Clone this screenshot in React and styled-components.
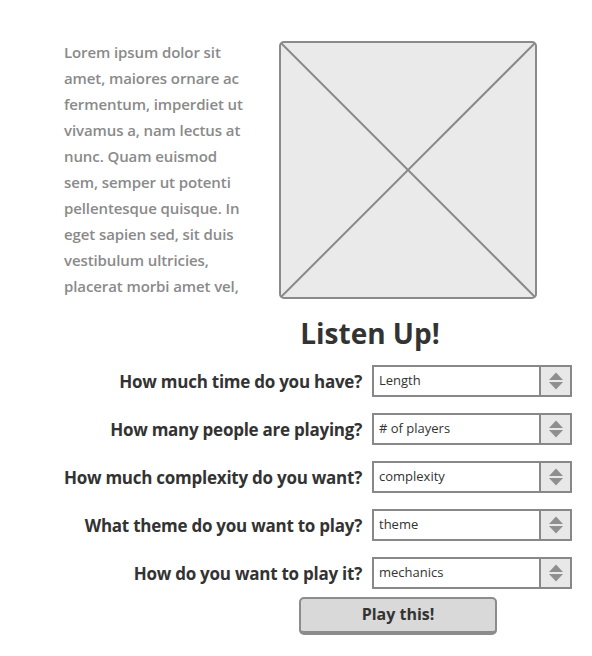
import React from 'react';
import styled, { createGlobalStyle } from 'styled-components';

const GlobalStyle = createGlobalStyle`
  body {
    margin: 0;
    background: #ffffff;
    font-family: "Open Sans", "Liberation Sans", sans-serif;
  }
`;

const Page = styled.div`
  width: 592px;
  padding-top: 39px;
`;

const Intro = styled.div`
  display: flex;
  align-items: flex-start;
  padding-left: 64px;
  gap: 27px;
`;

const Blurb = styled.p`
  margin: 0;
  width: 188px;
  font-size: 15px;
  font-weight: 600;
  line-height: 26px;
  letter-spacing: -0.1px;
  color: #8a8a8a;
`;

const Placeholder = styled.svg`
  display: block;
  margin-top: 2px;
  flex: none;
`;

const Title = styled.h1`
  margin: 15px 0 0;
  padding-left: 148px;
  text-align: center;
  font-size: 28px;
  font-weight: 700;
  line-height: 38px;
  color: #333333;
`;

const Form = styled.div`
  display: grid;
  grid-template-columns: 362px 200px;
  column-gap: 10px;
  row-gap: 16px;
  margin-top: 13px;
`;

const Label = styled.label`
  align-self: center;
  text-align: right;
  font-size: 17px;
  font-weight: 700;
  letter-spacing: -0.25px;
  color: #333333;
`;

const Select = styled.div`
  display: flex;
  height: 32px;
  box-sizing: border-box;
  border: 2px solid #888888;
  background: #ffffff;
`;

const Value = styled.span`
  flex: 1;
  padding: 0 5px;
  font-size: 13px;
  line-height: 26px;
  color: #333333;
`;

const Spinner = styled.span`
  width: 29px;
  display: flex;
  align-items: center;
  justify-content: center;
  border-left: 2px solid #888888;
  background: #e8e8e8;
`;

const Actions = styled.div`
  padding-left: 299px;
  margin-top: 8px;
`;

const PlayButton = styled.button`
  width: 198px;
  height: 38px;
  box-sizing: border-box;
  border: 2px solid #8c8c8c;
  border-bottom-width: 4px;
  border-radius: 5px;
  background: #d9d9d9;
  font-family: inherit;
  font-size: 16px;
  font-weight: 700;
  color: #333333;
  padding: 0 0 2px;
  cursor: pointer;
`;

const questions = [
  ['How much time do you have?', 'Length'],
  ['How many people are playing?', '# of players'],
  ['How much complexity do you want?', 'complexity'],
  ['What theme do you want to play?', 'theme'],
  ['How do you want to play it?', 'mechanics'],
];

function Arrows() {
  return (
    <svg width="14" height="18" viewBox="0 0 14 18">
      <path d="M0 8 L7 0.5 L14 8 Z" fill="#8f8f8f" />
      <path d="M0 10 L7 17.5 L14 10 Z" fill="#8f8f8f" />
    </svg>
  );
}

export default function App() {
  return (
    <Page>
      <GlobalStyle />
      <Intro>
        <Blurb>
          Lorem ipsum dolor sit amet, maiores ornare ac fermentum, imperdiet ut
          vivamus a, nam lectus at nunc. Quam euismod sem, semper ut potenti
          pellentesque quisque. In eget sapien sed, sit duis vestibulum ultricies,
          placerat morbi amet vel,
        </Blurb>
        <Placeholder width="258" height="258" viewBox="0 0 258 258">
          <rect x="1" y="1" width="256" height="256" rx="4" fill="#eaeaea" stroke="#8a8a8a" strokeWidth="2" />
          <line x1="2" y1="2" x2="256" y2="256" stroke="#8a8a8a" strokeWidth="2" />
          <line x1="256" y1="2" x2="2" y2="256" stroke="#8a8a8a" strokeWidth="2" />
        </Placeholder>
      </Intro>

      <Title>Listen Up!</Title>

      <Form>
        {questions.map(([q, v]) => (
          <React.Fragment key={q}>
            <Label>{q}</Label>
            <Select>
              <Value>{v}</Value>
              <Spinner>
                <Arrows />
              </Spinner>
            </Select>
          </React.Fragment>
        ))}
      </Form>

      <Actions>
        <PlayButton>Play this!</PlayButton>
      </Actions>
    </Page>
  );
}
